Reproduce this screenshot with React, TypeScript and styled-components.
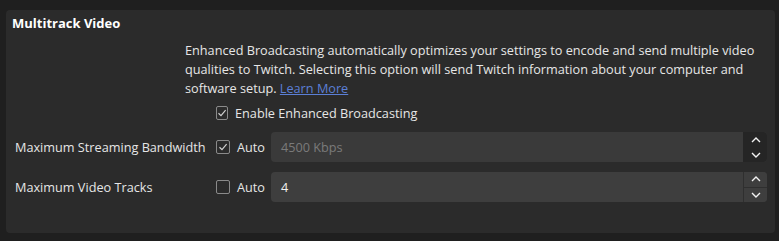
import styled, { createGlobalStyle } from "styled-components";

const GlobalStyle = createGlobalStyle`
  html, body {
    margin: 0;
    padding: 0;
    background-color: #1f1f1f;
    font-family: "Open Sans", "Noto Sans", sans-serif;
    font-size: 12.7px;
    color: #e6e6e6;
  }
`;

const Wrapper = styled.div`
  width: 779px;
  height: 241px;
  box-sizing: border-box;
  padding: 10px 4px 8px 6px;
`;

const Panel = styled.section`
  height: 100%;
  box-sizing: border-box;
  background-color: #2b2b2b;
  border-radius: 4px;
  padding: 4px 8px 0 6px;
`;

const Title = styled.h3`
  margin: 0;
  font-size: 13px;
  font-weight: 700;
  line-height: 18px;
  color: #ffffff;
`;

const Description = styled.p`
  margin: 9px 0 0 173px;
  line-height: 19px;
  white-space: nowrap;
  color: #e6e6e6;
  a {
    color: #5b7fd6;
    text-decoration: underline;
  }
`;

const Row = styled.div<{ $mt: number }>`
  display: flex;
  align-items: center;
  height: 30px;
  margin-top: ${(p) => p.$mt}px;
  padding-left: 3px;
`;

const Label = styled.div`
  width: 201px;
  flex-shrink: 0;
  white-space: nowrap;
`;

const Check = styled.label`
  display: flex;
  align-items: center;
  gap: 7px;
  width: 55px;
  flex-shrink: 0;
  white-space: nowrap;
`;

const Box = styled.span`
  display: inline-flex;
  align-items: center;
  justify-content: center;
  width: 12px;
  height: 12px;
  border: 1px solid #8a8a8a;
  border-radius: 2px;
`;

const Field = styled.div<{ $disabled?: boolean }>`
  flex: 1;
  display: flex;
  height: 30px;
  border-radius: 4px;
  background-color: ${(p) => (p.$disabled ? "#3a3a3a" : "#3e3e3e")};
  overflow: hidden;
`;

const Value = styled.div<{ $disabled?: boolean }>`
  flex: 1;
  display: flex;
  align-items: center;
  padding-left: 10px;
  color: ${(p) => (p.$disabled ? "#7a7a7a" : "#f0f0f0")};
`;

const Spin = styled.div<{ $disabled?: boolean }>`
  width: 23px;
  display: flex;
  flex-direction: column;
  background-color: ${(p) => (p.$disabled ? "#252525" : "#3e3e3e")};
  border-left: 1px solid ${(p) => (p.$disabled ? "#252525" : "#2f2f2f")};
`;

const SpinButton = styled.div<{ $divider?: boolean }>`
  flex: 1;
  display: flex;
  align-items: center;
  justify-content: center;
  border-top: ${(p) => (p.$divider ? "1px solid #2f2f2f" : "none")};
`;

function CheckBox({ checked }: { checked: boolean }) {
  return (
    <Box>
      {checked && (
        <svg width="10" height="10" viewBox="0 0 10 10">
          <path d="M1.5 5.2 L4 7.6 L8.6 2.2" fill="none" stroke="#d0d0d0" strokeWidth="1.2" />
        </svg>
      )}
    </Box>
  );
}

function Chevron({ up }: { up?: boolean }) {
  return (
    <svg width="10" height="6" viewBox="0 0 10 6">
      <path d={up ? "M1 5 L5 1 L9 5" : "M1 1 L5 5 L9 1"} fill="none" stroke="#f2f2f2" strokeWidth="1.4" />
    </svg>
  );
}

function SpinBox({ value, disabled }: { value: string; disabled?: boolean }) {
  return (
    <Field $disabled={disabled}>
      <Value $disabled={disabled}>{value}</Value>
      <Spin $disabled={disabled}>
        <SpinButton>
          <Chevron up />
        </SpinButton>
        <SpinButton $divider={!disabled}>
          <Chevron />
        </SpinButton>
      </Spin>
    </Field>
  );
}

function App() {
  return (
    <Wrapper>
      <GlobalStyle />
      <Panel>
        <Title>Multitrack Video</Title>
        <Description>
          Enhanced Broadcasting automatically optimizes your settings to encode and send multiple video
          <br />
          qualities to Twitch. Selecting this option will send Twitch information about your computer and
          <br />
          software setup. <a href="#">Learn More</a>
        </Description>
        <Row $mt={0}>
          <Label />
          <Check>
            <CheckBox checked />
            <span>Enable Enhanced Broadcasting</span>
          </Check>
        </Row>
        <Row $mt={4}>
          <Label>Maximum Streaming Bandwidth</Label>
          <Check>
            <CheckBox checked />
            Auto
          </Check>
          <SpinBox value="4500 Kbps" disabled />
        </Row>
        <Row $mt={10}>
          <Label>Maximum Video Tracks</Label>
          <Check>
            <CheckBox checked={false} />
            Auto
          </Check>
          <SpinBox value="4" />
        </Row>
      </Panel>
    </Wrapper>
  );
}

export default App;
